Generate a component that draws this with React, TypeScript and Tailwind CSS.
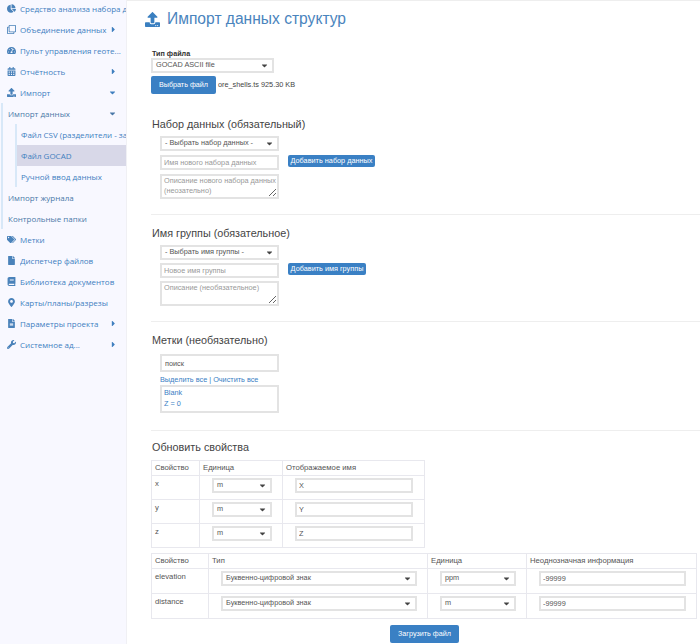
import type { ReactNode } from 'react';
import {
  FaBook,
  FaCalendarAlt,
  FaCaretDown,
  FaCaretRight,
  FaChartPie,
  FaFile,
  FaFileAlt,
  FaMapMarkerAlt,
  FaRegClone,
  FaTachometerAlt,
  FaTags,
  FaUpload,
  FaWrench,
} from 'react-icons/fa';

const field = 'border-2 border-[#e3e3e3] bg-white text-[7.3px] text-[#555] outline-none placeholder:text-[#999]';

function NavRow({ icon, label, caret }: { icon: ReactNode; label: string; caret?: 'right' | 'down' }) {
  return (
    <div className="flex h-[21px] items-center pl-[4px] text-[8px] text-[#3f7fbf] whitespace-nowrap overflow-hidden">
      <span className="flex w-[15px] justify-center text-[9px] text-[#4a82ba]">{icon}</span>
      <span className="ml-[1px] flex-1 overflow-hidden">{label}</span>
      {caret === 'right' && <FaCaretRight className="mr-[8px] text-[9px] shrink-0" />}
      {caret === 'down' && <FaCaretDown className="mr-[9px] text-[9px] shrink-0" />}
    </div>
  );
}

function Sidebar() {
  return (
    <aside className="w-[127px] shrink-0 bg-[#f8f8ff] border-r border-[#f0f0f4] overflow-hidden font-['Open_Sans',sans-serif]">
      <div className="-mt-[2px]">
        <NavRow icon={<FaChartPie />} label="Средство анализа набора данных" />
        <NavRow icon={<FaRegClone />} label="Объединение данных" caret="right" />
        <NavRow icon={<FaTachometerAlt />} label="Пульт управления геоте..." />
        <NavRow icon={<FaCalendarAlt />} label="Отчётность" caret="right" />
        <NavRow icon={<FaUpload />} label="Импорт" caret="down" />
      </div>
      <div className="ml-[1px] border-l-2 border-[#d8e8f8] text-[8px] text-[#3f7fbf] whitespace-nowrap">
        <div className="flex h-[21px] items-center pl-[5px] text-[#4a78a8]">
          <span className="flex-1">Импорт данных</span>
          <FaCaretDown className="mr-[9px] text-[9px]" />
        </div>
        <div className="ml-[12px] border-l-2 border-[#d8e8f8]">
          <div className="flex h-[21px] items-center pl-[4px] overflow-hidden">Файл CSV (разделители - запятые)</div>
          <div className="flex h-[21px] items-center pl-[4px] bg-[#d8d8e8]">Файл GOCAD</div>
          <div className="flex h-[21px] items-center pl-[4px]">Ручной ввод данных</div>
        </div>
        <div className="flex h-[21px] items-center pl-[5px] text-[#4a78a8]">Импорт журнала</div>
        <div className="flex h-[21px] items-center pl-[5px] text-[#4a78a8]">Контрольные папки</div>
      </div>
      <NavRow icon={<FaTags />} label="Метки" />
      <NavRow icon={<FaFile />} label="Диспетчер файлов" />
      <NavRow icon={<FaBook />} label="Библиотека документов" />
      <NavRow icon={<FaMapMarkerAlt />} label="Карты/планы/разрезы" />
      <NavRow icon={<FaFileAlt />} label="Параметры проекта" caret="right" />
      <NavRow icon={<FaWrench />} label="Системное ад..." caret="right" />
    </aside>
  );
}

function Select({ value, className }: { value: string; className: string }) {
  return (
    <div className={`${field} flex items-center justify-between pl-[3px] pr-[3px] ${className}`}>
      <span className="whitespace-nowrap">{value}</span>
      <FaCaretDown className="text-[9px] text-[#444]" />
    </div>
  );
}

function Heading({ children }: { children: ReactNode }) {
  return <h3 className="ml-[1px] text-[10.8px] leading-[14px] text-[#444]">{children}</h3>;
}

function Rule({ className }: { className: string }) {
  return <hr className={`border-t border-[#eeeeee] ${className}`} />;
}

function SmallButton({ children, className }: { children: ReactNode; className: string }) {
  return (
    <button className={`h-[12px] rounded-[2px] bg-[#3a80c4] text-[7.3px] leading-[12px] whitespace-nowrap text-white ${className}`}>
      {children}
    </button>
  );
}

function Th({ children }: { children: ReactNode }) {
  return (
    <th className="h-[15px] border border-[#e8e8ee] px-[3px] text-left align-middle text-[7.7px] font-normal whitespace-nowrap text-[#555]">
      {children}
    </th>
  );
}

function PropRow({ name }: { name: string }) {
  return (
    <tr className="h-[24px]">
      <td className="border border-[#e8e8ee] px-[3px] pt-[2px] align-top text-[7.7px] leading-[12px] text-[#555]">{name}</td>
      <td className="border border-[#e8e8ee] pl-[12px] pt-[2px] align-top">
        <Select value="m" className="h-[15px] w-[60px]" />
      </td>
      <td className="border border-[#e8e8ee] pl-[12px] pt-[2px] align-top">
        <input readOnly defaultValue={name.toUpperCase()} className={`${field} block h-[15px] w-[118px] px-[2px]`} />
      </td>
    </tr>
  );
}

function AttrRow({ name, unit }: { name: string; unit: string }) {
  return (
    <tr className="h-[25px]">
      <td className="border border-[#e8e8ee] px-[3px] pt-[2px] align-top text-[7.7px] leading-[12px] text-[#555]">{name}</td>
      <td className="border border-[#e8e8ee] pl-[12px] pt-[2px] align-top">
        <Select value="Буквенно-цифровой знак" className="h-[15px] w-[196px]" />
      </td>
      <td className="border border-[#e8e8ee] pl-[12px] pt-[2px] align-top">
        <Select value={unit} className="h-[15px] w-[76px]" />
      </td>
      <td className="border border-[#e8e8ee] pl-[12px] pt-[2px] align-top">
        <input readOnly defaultValue="-99999" className={`${field} block h-[15px] w-[147px] px-[2px]`} />
      </td>
    </tr>
  );
}

export default function App() {
  return (
    <div className="flex h-[644px] w-[700px] overflow-hidden bg-white font-['Liberation_Sans',sans-serif]">
      <Sidebar />
      <main className="flex-1 border-t border-[#eeeeee] pl-[24px] pr-[3px]">
        <div className="-ml-[6px] mt-[9px] flex items-center">
          <FaUpload className="text-[15px] text-[#3a7fc0]" />
          <h1 className="ml-[7px] text-[15.6px] leading-[18px] text-[#4a84bd]">Импорт данных структур</h1>
        </div>

        <div className="mt-[21px] ml-[1px] text-[7.2px] leading-[9px] font-bold text-[#333]">Тип файла</div>
        <Select value="GOCAD ASCII file" className="h-[15px] w-[123px]" />
        <div className="mt-[3px] flex items-center">
          <button className="h-[18px] w-[65px] rounded-[2px] bg-[#3a80c4] text-[7.2px] text-white">Выбрать файл</button>
          <span className="ml-[2px] text-[7.3px] text-[#444]">ore_shells.ts 925.30 KB</span>
        </div>

        <div className="mt-[23px]">
          <Heading>Набор данных (обязательный)</Heading>
        </div>
        <div className="ml-[9px] mt-[5px] flex flex-col gap-[4px]">
          <Select value="- Выбрать набор данных -" className="h-[15px] w-[119px]" />
          <div className="flex items-start">
            <input placeholder="Имя нового набора данных" className={`${field} block h-[15px] w-[119px] px-[2px]`} />
            <SmallButton className="ml-[9px] w-[87px]">Добавить набор данных</SmallButton>
          </div>
          <textarea
            placeholder="Описание нового набора данных (неозательно)"
            className={`${field} block h-[25px] w-[119px] pl-[2px] pr-0 text-[7.1px] leading-[10px]`}
          />
        </div>

        <Rule className="mt-[15px] -mr-[3px]" />
        <div className="mt-[11px]">
          <Heading>Имя группы (обязательное)</Heading>
        </div>
        <div className="ml-[9px] mt-[5px] flex flex-col gap-[3px]">
          <Select value="- Выбрать имя группы -" className="h-[15px] w-[119px]" />
          <div className="flex items-start">
            <input placeholder="Новое имя группы" className={`${field} block h-[15px] w-[119px] px-[2px]`} />
            <SmallButton className="ml-[9px] w-[78px]">Добавить имя группы</SmallButton>
          </div>
          <textarea
            placeholder="Описание (необязательное)"
            className={`${field} block h-[25px] w-[119px] px-[2px] leading-[10px]`}
          />
        </div>

        <Rule className="mt-[15px] -mr-[3px]" />
        <div className="mt-[11px]">
          <Heading>Метки (необязательно)</Heading>
        </div>
        <div className="ml-[9px] mt-[7px]">
          <input readOnly defaultValue="поиск" className={`${field} block h-[18px] w-[119px] px-[3px]`} />
          <div className="mt-[3px] text-[7.3px] leading-[10px] text-[#3a80c4]">Выделить все | Очистить все</div>
          <div className={`${field} h-[28px] w-[119px] px-[2px] leading-[11px]`}>
            <div className="text-[#3a80c4]">Blank</div>
            <div className="text-[#3a80c4]">Z = 0</div>
          </div>
        </div>

        <Rule className="mt-[17px] -mr-[3px]" />
        <div className="mt-[9px]">
          <Heading>Обновить свойства</Heading>
        </div>

        <table className="mt-[6px] w-[273px] table-fixed border-collapse">
          <colgroup>
            <col className="w-[48px]" />
            <col className="w-[83px]" />
            <col className="w-[142px]" />
          </colgroup>
          <thead>
            <tr>
              <Th>Свойство</Th>
              <Th>Единица</Th>
              <Th>Отображаемое имя</Th>
            </tr>
          </thead>
          <tbody>
            <PropRow name="x" />
            <PropRow name="y" />
            <PropRow name="z" />
          </tbody>
        </table>

        <table className="mt-[5px] w-[545px] table-fixed border-collapse">
          <colgroup>
            <col className="w-[57px]" />
            <col className="w-[219px]" />
            <col className="w-[99px]" />
            <col className="w-[170px]" />
          </colgroup>
          <thead>
            <tr>
              <Th>Свойство</Th>
              <Th>Тип</Th>
              <Th>Единица</Th>
              <Th>Неоднозначная информация</Th>
            </tr>
          </thead>
          <tbody>
            <AttrRow name="elevation" unit="ppm" />
            <AttrRow name="distance" unit="m" />
          </tbody>
        </table>

        <div className="mt-[6px] ml-[239px] flex">
          <button className="h-[18px] w-[69px] rounded-[2px] bg-[#3a80c4] text-[7.2px] text-white">Загрузить файл</button>
        </div>
      </main>
    </div>
  );
}
